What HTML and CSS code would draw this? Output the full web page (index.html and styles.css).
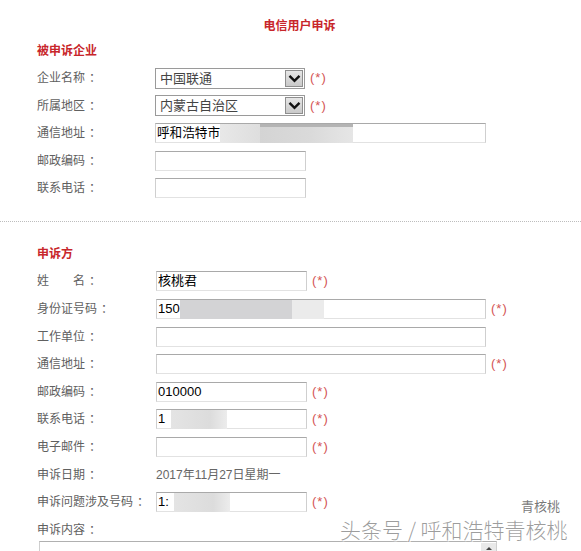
FILE: index.html
```html
<!DOCTYPE html>
<html lang="zh-CN">
<head>
<meta charset="utf-8">
<title>电信用户申诉</title>
<link rel="stylesheet" href="styles.css">
</head>
<body>
<div class="page">
  <h1 class="title">电信用户申诉</h1>

  <section class="group group-company">
    <h2 class="group-title">被申诉企业</h2>
    <div class="rows">
      <div class="row">
        <span class="label">企业名称<span class="colon">：</span></span>
        <div class="select"><span class="select-text">中国联通</span><span class="select-btn"><svg width="13" height="9" viewBox="0 0 13 9"><polyline points="1.5,1.8 6.5,6.8 11.5,1.8" fill="none" stroke="#111" stroke-width="2.4"/></svg></span></div>
        <span class="req">(*)</span>
      </div>
      <div class="row">
        <span class="label">所属地区<span class="colon">：</span></span>
        <div class="select"><span class="select-text">内蒙古自治区</span><span class="select-btn"><svg width="13" height="9" viewBox="0 0 13 9"><polyline points="1.5,1.8 6.5,6.8 11.5,1.8" fill="none" stroke="#111" stroke-width="2.4"/></svg></span></div>
        <span class="req">(*)</span>
      </div>
      <div class="row">
        <span class="label">通信地址<span class="colon">：</span></span>
        <div class="field field-long field-first"><span class="val val-addr">呼和浩特市</span><span class="blur blur-addr-a"></span><span class="blur blur-addr-b"></span></div>
      </div>
      <div class="row">
        <span class="label">邮政编码<span class="colon">：</span></span>
        <div class="field field-short field-first"></div>
      </div>
      <div class="row">
        <span class="label">联系电话<span class="colon">：</span></span>
        <div class="field field-short field-first"></div>
      </div>
    </div>
  </section>

  <hr class="divider">

  <section class="group group-person">
    <h2 class="group-title">申诉方</h2>
    <div class="rows">
      <div class="row">
        <span class="label">姓　　名<span class="colon">：</span></span>
        <div class="field field-short"><span class="val">核桃君</span></div>
        <span class="req">(*)</span>
      </div>
      <div class="row">
        <span class="label">身份证号码<span class="colon">：</span></span>
        <div class="field field-long"><span class="val">150</span><span class="blur blur-id-a"></span><span class="blur blur-id-b"></span></div>
        <span class="req">(*)</span>
      </div>
      <div class="row">
        <span class="label">工作单位<span class="colon">：</span></span>
        <div class="field field-long"></div>
      </div>
      <div class="row">
        <span class="label">通信地址<span class="colon">：</span></span>
        <div class="field field-long"></div>
        <span class="req">(*)</span>
      </div>
      <div class="row">
        <span class="label">邮政编码<span class="colon">：</span></span>
        <div class="field field-short"><span class="val">010000</span></div>
        <span class="req">(*)</span>
      </div>
      <div class="row">
        <span class="label">联系电话<span class="colon">：</span></span>
        <div class="field field-short"><span class="val">1</span><span class="blur blur-phone"></span></div>
        <span class="req">(*)</span>
      </div>
      <div class="row">
        <span class="label">电子邮件<span class="colon">：</span></span>
        <div class="field field-short"></div>
        <span class="req">(*)</span>
      </div>
      <div class="row">
        <span class="label">申诉日期<span class="colon">：</span></span>
        <span class="date">2017年11月27日星期一</span>
      </div>
      <div class="row">
        <span class="label">申诉问题涉及号码<span class="colon">：</span></span>
        <div class="field field-short"><span class="val">1:</span><span class="blur blur-num"></span></div>
        <span class="req">(*)</span>
      </div>
      <div class="row row-content">
        <span class="label">申诉内容<span class="colon">：</span></span>
      </div>
    </div>
    <div class="textarea"><span class="scroll-up"></span></div>
  </section>

  <div class="watermark-small">青核桃</div>
  <div class="watermark">头条号 / 呼和浩特青核桃</div>
</div>
</body>
</html>
```

FILE: styles.css
```css
* { box-sizing: border-box; }

html, body {
  margin: 0;
  padding: 0;
  background: #fff;
}

.page {
  position: relative;
  width: 581px;
  height: 551px;
  overflow: hidden;
  font-family: "Liberation Sans", "Noto Sans CJK SC", sans-serif;
  font-size: 12px;
  color: #555;
}

.title {
  margin: 19px 0 0 0;
  padding-left: 18px;
  text-align: center;
  font-size: 12px;
  line-height: 14px;
  font-weight: bold;
  color: #c8262b;
}

.group {
  padding-left: 37px;
}

.group-title {
  margin: 0;
  font-size: 12px;
  line-height: 14px;
  font-weight: bold;
  color: #c8262b;
}

.group-company .group-title { margin-top: 11px; }
.group-person .group-title { margin-top: 0; }

.rows {
  display: flex;
  flex-direction: column;
  gap: 7.6px;
  margin-top: 10px;
}

.row {
  display: flex;
  align-items: center;
  height: 20px;
}

.label {
  width: 118px;
  flex: none;
  color: #606060;
  font-size: 12px;
  line-height: 20px;
  white-space: nowrap;
}

.colon {
  padding-left: 4px;
}

.select {
  position: relative;
  display: flex;
  align-items: center;
  width: 150px;
  height: 21px;
  border: 1px solid #9a9a9a;
  background: #fff;
}

.select-text {
  padding-left: 4px;
  font-size: 13px;
  color: #444;
  line-height: 19px;
}

.select-btn {
  margin-left: auto;
  margin-right: 1px;
  width: 18px;
  height: 17px;
  display: flex;
  align-items: center;
  justify-content: center;
  border: 1px solid #8e8e8e;
  background: linear-gradient(#e6e6e6, #c9c9c9);
}

.req {
  margin-left: 5px;
  color: #d45454;
  font-size: 13px;
  letter-spacing: 1px;
  line-height: 20px;
}

.field {
  display: flex;
  align-items: stretch;
  height: 20px;
  margin-left: 1px;
  border: 1px solid #cfcfcf;
  border-top-color: #a9a9a9;
  border-bottom-color: #e2e2e2;
  background: #fff;
}

.field-first { margin-left: 0; }
.field-short { width: 151px; }
.field-long { width: 330px; }
.field-first.field-long { width: 331px; }

.val {
  padding-left: 1px;
  font-size: 13px;
  line-height: 18px;
  color: #000;
}

.val-addr { font-size: 12.6px; }

.blur { display: block; height: 19px; }

.blur-addr-a {
  width: 40px;
  background: linear-gradient(to right, #e8e8e8, #dedede);
}
.blur-addr-b {
  width: 93px;
  background: linear-gradient(to right, #d4d4d4, #dadada 55%, #e6e6e6);
  box-shadow: inset 0 3px 0 #b4b4b4;
}

.blur-id-a {
  width: 112px;
  background: #d3d3d5;
}
.blur-id-b {
  width: 32px;
  background: #ebebeb;
}

.blur-phone,
.blur-num {
  margin-left: 6px;
  width: 56px;
  background: linear-gradient(to right, #e4e4e4, #dcdcdc 70%, #ececec);
}
.blur-num { margin-left: 5px; }

.date {
  margin-left: 1px;
  color: #666;
  font-size: 12px;
  line-height: 20px;
}

.divider {
  margin: 23px 0 0 0;
  border: 0;
  border-top: 1px dotted #bdbdbd;
  height: 0;
}

.group-person { margin-top: 25px; }

.textarea {
  position: relative;
  margin: 1px 0 0 2px;
  width: 458px;
  height: 120px;
  border: 1px solid #cfcfcf;
  border-top-color: #b0b0b0;
  background: #fff;
}

.scroll-up {
  position: absolute;
  top: 1px;
  right: 0;
  width: 15px;
  height: 14px;
  background: #e9e9e9;
}
.scroll-up::after {
  content: "";
  position: absolute;
  left: 5px;
  top: 4px;
  border-left: 3px solid transparent;
  border-right: 3px solid transparent;
  border-bottom: 3px solid #444;
}

.watermark {
  position: absolute;
  left: 340px;
  top: 518px;
  font-family: "Noto Sans CJK SC", sans-serif;
  font-size: 21px;
  font-weight: 300;
  line-height: 22px;
  color: rgba(120, 120, 120, 0.72);
  white-space: nowrap;
  text-shadow: 0 0 1px #fff, 0 0 2px #fff, 1px 1px 0 rgba(255,255,255,0.8);
}

.watermark-small {
  position: absolute;
  left: 521px;
  top: 499px;
  font-family: "Noto Sans CJK SC", sans-serif;
  font-size: 13px;
  line-height: 14px;
  color: rgba(60, 60, 60, 0.7);
  white-space: nowrap;
}
```
